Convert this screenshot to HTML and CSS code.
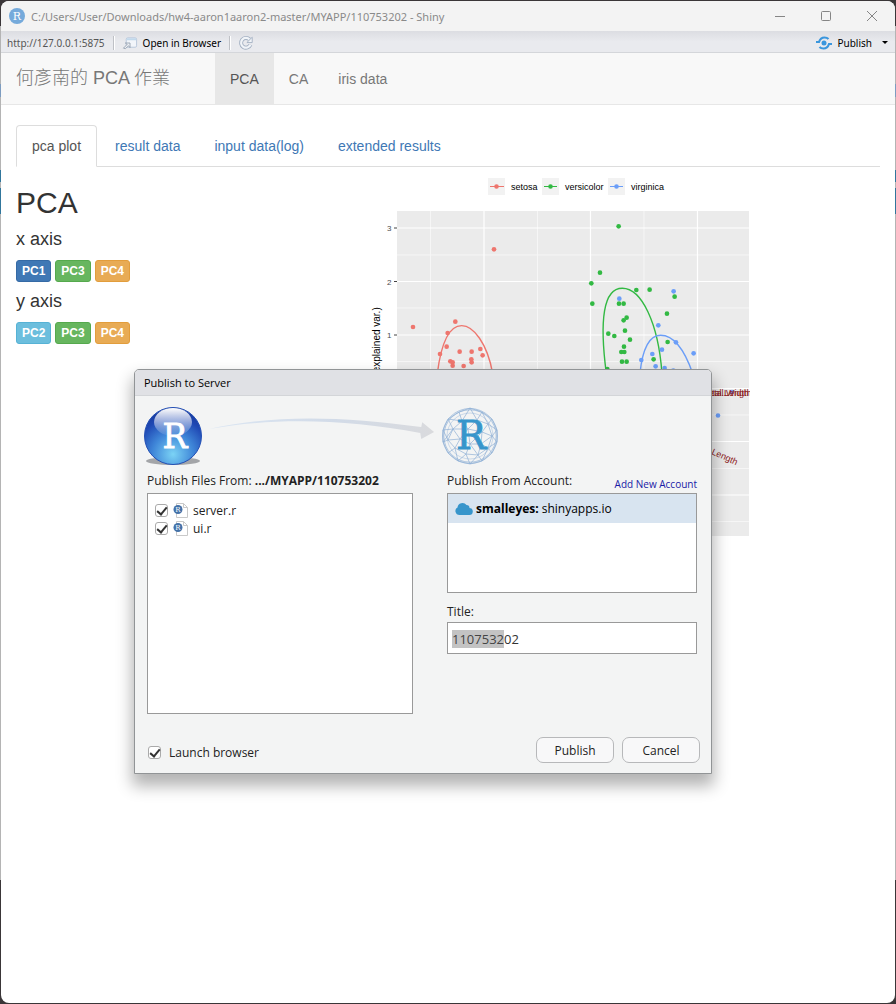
FILE: index.html
```html
<!DOCTYPE html>
<html lang="zh-Hant">
<head>
<meta charset="utf-8">
<meta name="viewport" content="width=device-width, initial-scale=1">
<title>Shiny</title>
<link rel="stylesheet" href="styles.css">
</head>
<body>
<div class="window">
  <header class="titlebar">
    <svg class="app-icon" viewBox="0 0 16 16" aria-hidden="true"><circle cx="8" cy="8" r="8" fill="#75aadb"/><text class="serif" x="8" y="12" font-size="11" text-anchor="middle" fill="#fff">R</text></svg>
    <span class="title">C:/Users/User/Downloads/hw4-aaron1aaron2-master/MYAPP/110753202 - Shiny</span>
    <div class="window-controls">
      <button aria-label="Minimize"><svg viewBox="0 0 12 12"><path d="M1 6.5h10"/></svg></button>
      <button aria-label="Maximize"><svg viewBox="0 0 12 12"><rect x="1.5" y="1.5" width="9" height="9" rx="1"/></svg></button>
      <button aria-label="Close"><svg viewBox="0 0 12 12"><path d="M1 1l10 10M11 1L1 11"/></svg></button>
    </div>
  </header>
  <div class="toolbar">
    <span class="url">http://127.0.0.1:5875</span>
    <span class="divider"></span>
    <button class="tool"><svg class="open-icon" viewBox="0 0 17 14" aria-hidden="true"><rect x="4.500" y="1.500" width="11" height="10" rx="1.500" fill="#f2f5fa" stroke="#b7c6da"/><path d="M5 2h10v2H5z" fill="#c2d9ec"/><path d="M1.500 12.500l4-4-2-1.500h5v5l-1.500-2-3.500 3z" fill="#eef1f5" stroke="#9aa4b3"/></svg>Open in Browser</button>
    <span class="divider"></span>
    <button class="tool" aria-label="Refresh"><svg class="refresh-icon" viewBox="0 0 18 18"><path d="M13 5A5.500 5.500 0 1 0 14 11" fill="none" stroke="#a3b0c2" stroke-width="4.500"/><path d="M13 5A5.500 5.500 0 1 0 14 11" fill="none" stroke="#f1f4f8" stroke-width="2.500"/><path d="M10 8.500h6v-6z" fill="#f1f4f8" stroke="#a3b0c2"/></svg></button>
    <button class="tool publish"><svg class="publish-icon" viewBox="0 0 16 14" aria-hidden="true"><circle cx="8" cy="7" r="2.500" fill="#3a96dd"/><path d="M0 6h3c1-3 3-4.500 5.500-4.500 2 0 3 .5 4 1.500M16 8h-3c-1 3-3 4.500-5.500 4.500-2 0-3-.5-4-1.500" fill="none" stroke="#3a96dd" stroke-width="2.200"/></svg>Publish<span class="caret"></span></button>
  </div>
  <nav class="navbar">
    <a class="brand" href="#">何彥南的 PCA 作業</a>
    <a class="nav-link active" href="#">PCA</a>
    <a class="nav-link" href="#">CA</a>
    <a class="nav-link" href="#">iris data</a>
  </nav>
  <main class="page">
    <div class="tabs">
      <a class="tab active" href="#">pca plot</a>
      <a class="tab" href="#">result data</a>
      <a class="tab" href="#">input data(log)</a>
      <a class="tab" href="#">extended results</a>
    </div>
    <div class="columns">
      <section class="axes">
        <h2>PCA</h2>
        <h4>x axis</h4>
        <div class="buttons"><button class="btn primary">PC1</button><button class="btn success">PC3</button><button class="btn warning">PC4</button></div>
        <h4>y axis</h4>
        <div class="buttons"><button class="btn info">PC2</button><button class="btn success">PC3</button><button class="btn warning">PC4</button></div>
      </section>
      <svg class="plot" viewBox="370 174 380 366" role="img" aria-label="PCA biplot">
        <rect x="397" y="211" width="352" height="325" fill="#ebebeb"/>
        <path d="M430.500 211v325M537.500 211v325M644 211v325M397 255h352M397 308h352M397 361.500h352M397 415h352M397 468.500h352M397 521.500h352" stroke="#f6f6f6"/>
        <path d="M484 211v325M590.500 211v325M697.500 211v325M397 228h352M397 281.500h352M397 335h352M397 388.500h352M397 441.500h352M397 495h352" stroke="#fff" stroke-width="1.200"/>
        <path d="M394 228h3M394 281.500h3M394 335h3" stroke="#444"/>
        <g class="tick"><text x="387" y="231">3</text><text x="387" y="285">2</text><text x="387" y="338">1</text></g>
        <text class="axis-title" transform="translate(380 429) rotate(-90)">PC2 (22.9% explained var.)</text>
        <g fill="#f2f2f2"><rect x="488" y="178" width="17" height="17"/><rect x="542" y="178" width="17" height="17"/><rect x="608" y="178" width="17" height="17"/></g>
        <g stroke-width="1.200"><path d="M490 186.500h14" stroke="#ee766e"/><path d="M544 186.500h13" stroke="#32b943"/><path d="M610 186.500h13" stroke="#6b9ef8"/></g>
        <circle cx="496.500" cy="186.500" r="2.300" fill="#ee766e"/><circle cx="550.500" cy="186.500" r="2.300" fill="#32b943"/><circle cx="616.500" cy="186.500" r="2.300" fill="#6b9ef8"/>
        <g class="legend"><text x="511" y="190">setosa</text><text x="565" y="190">versicolor</text><text x="631" y="190">virginica</text></g>
        <g transform="translate(360 170) scale(.3333)" fill="none" stroke-width="4.200">
          <path d="M232 610C245 510 270 467 305 467C340 467 382 520 398 610" stroke="#ee766e"/>
          <path d="M739 610C718 450 730 355 787 355C845 355 895 460 906 610" stroke="#32b943"/>
          <path d="M840 610C848 535 868 496 902 496C935 496 970 530 998 610" stroke="#6b9ef8"/>
        </g>
        <g id="dots" transform="translate(360 170) scale(.3333)"></g>
        <circle cx="732" cy="392" r="2.300" fill="#6b9ef8"/><circle cx="718" cy="415.500" r="2.300" fill="#6b9ef8"/>
        <g class="vector"><text x="701" y="396">Petal.Length</text><text x="703" y="396">Petal.Width</text><text x="711" y="454" transform="rotate(24 711 454)">Length</text></g>
      </svg>
    </div>
  </main>
</div>

<section class="dialog" role="dialog" aria-labelledby="dlg-title">
  <h1 class="dialog-title" id="dlg-title">Publish to Server</h1>
  <div class="dialog-body">
    <div class="hero">
      <svg class="ball" viewBox="0 0 60 60" aria-hidden="true">
        <defs><radialGradient id="ball" cx=".5" cy=".82" r=".8"><stop offset="0" stop-color="#7bd3f5"/><stop offset=".45" stop-color="#3f86d8"/><stop offset=".8" stop-color="#1f48b4"/><stop offset="1" stop-color="#183a9c"/></radialGradient><linearGradient id="gloss" x2="0" y2="1"><stop offset="0" stop-color="#fff"/><stop offset="1" stop-color="#fff" stop-opacity=".05"/></linearGradient></defs>
        <ellipse cx="30" cy="55" rx="27" ry="4" fill="#a3a5a8"/><circle cx="30" cy="30" r="28.500" fill="url(#ball)" stroke="#2450b5"/><ellipse cx="30" cy="16" rx="19" ry="14" fill="url(#gloss)"/>
        <text class="serif" x="32" y="42" font-size="33" text-anchor="middle" fill="#fff" stroke="#fff" stroke-width=".8">R</text>
      </svg>
      <svg class="arrow" viewBox="0 0 240 60" aria-hidden="true"><defs><linearGradient id="arr"><stop offset="0" stop-color="#dbe6f3"/><stop offset=".55" stop-color="#d2dbe8"/><stop offset="1" stop-color="#d9dadd"/></linearGradient></defs><path d="M6 23C72 8 140 10 221 21L222 16L234 26L221 33L220 27C147 13 72 11 6 23Z" fill="url(#arr)"/></svg>
      <svg class="globe" viewBox="0 0 60 60" aria-hidden="true">
        <g fill="none" stroke="#8fb0d6" stroke-width=".7"><circle cx="30" cy="30" r="27.500"/><circle cx="30" cy="30" r="26.200"/><circle cx="30" cy="30" r="23" opacity=".6"/><path d="M30 2L19 6L8 13L3 24V36L8 47L18 55L30 58L42 55L52 47L57 36V24L52 13L42 6ZM19 6L22 15L30 2L37 14L42 6M8 13L22 15L13 23L8 13M3 24L13 23L8 34L3 24M3 36L8 34L15 42L8 47M15 42L18 55L26 48L30 58L38 49L42 55L48 42L52 47M57 36L48 42L52 30L57 24L48 18L52 13M42 6L48 18L37 14L22 15L28 23L13 23L20 33L8 34M20 33L15 42L26 48L30 38L20 33L28 23L37 14L42 26L28 23L30 38L42 26L48 18L52 30L42 26L41 38L30 38L38 49L48 42L41 38L52 30M26 48L38 49L41 38M13 23L3 36M52 30L57 36"/></g>
        <text class="serif" x="31" y="43" font-size="40" text-anchor="middle" fill="#3795cb" stroke="#3795cb" stroke-width=".8">R</text>
      </svg>
    </div>
    <div class="forms">
      <div class="files">
        <p class="label">Publish Files From: <b>.../MYAPP/110753202</b></p>
        <div class="file-list">
          <label class="check"><input type="checkbox" checked><svg class="file-icon" viewBox="0 0 16 16" aria-hidden="true"><path d="M3.500 1.500h7l4 4v10h-11zM10.500 1.500v4h4" fill="#fff" stroke="#c9c9c9"/><circle cx="5" cy="7.500" r="4.500" fill="#4472a8"/><text class="serif" x="5" y="10" font-size="7" text-anchor="middle" fill="#fff">R</text></svg><span>server.r</span></label>
          <label class="check"><input type="checkbox" checked><svg class="file-icon" viewBox="0 0 16 16" aria-hidden="true"><path d="M3.500 1.500h7l4 4v10h-11zM10.500 1.500v4h4" fill="#fff" stroke="#c9c9c9"/><circle cx="5" cy="7.500" r="4.500" fill="#4472a8"/><text class="serif" x="5" y="10" font-size="7" text-anchor="middle" fill="#fff">R</text></svg><span>ui.r</span></label>
        </div>
      </div>
      <div class="account">
        <div class="label split"><span>Publish From Account:</span><a href="#">Add New Account</a></div>
        <div class="account-list"><div class="account-row"><svg class="cloud" viewBox="0 0 18 14" aria-hidden="true"><path d="M4.500 13A4 4 0 0 1 2.500 5.500A5 5 0 0 1 11.500 3A3 3 0 0 1 14.500 6A3.500 3.500 0 0 1 14 13Z" fill="#3795cb"/></svg><b>smalleyes:</b> shinyapps.io</div></div>
        <label class="label title-label" for="app-title">Title:</label>
        <input class="title-input" id="app-title" type="text" value="110753202">
      </div>
    </div>
    <div class="footer">
      <label class="check launch"><input type="checkbox" checked><span>Launch browser</span></label>
      <button class="action">Publish</button>
      <button class="action">Cancel</button>
    </div>
  </div>
</section>
<script src="app.js"></script>
</body>
</html>
```
FILE: styles.css
```css
* { box-sizing: border-box; }
body {
  margin: 0;
  min-height: 100vh;
  padding: 1px;
  display: flex;
  position: relative;
  background: linear-gradient(#3a3638 26px, #b4b4b4 26px, #b4b4b4 84px, #7d9cc0 84px, #7d9cc0 97px, #b4b4b4 97px, #b4b4b4 170px, #31769c 170px, #31769c 182px, #b4b4b4 182px, #b4b4b4 188px, #31769c 188px, #31769c 214px, #b4b4b4 214px, #b4b4b4 880px, #3a3638 880px);
  font-family: "Open Sans", "Noto Sans", sans-serif;
  font-size: 12px;
  color: #222;
}
button { font: inherit; color: inherit; cursor: pointer; }
a { text-decoration: none; }
.serif { font-family: "DejaVu Serif", serif; }
.window { flex: 1; background: #fff; border-radius: 8px; overflow: hidden; }
.titlebar { height: 30px; display: flex; align-items: center; background: #f3f3f3; padding-left: 8px; color: #8a8a8a; }
.app-icon { width: 16px; height: 16px; margin-right: 6px; }
.title { flex: 1; font-family: "Noto Sans", sans-serif; font-size: 11px; }
.window-controls { display: flex; }
.window-controls button { width: 46px; height: 30px; padding: 0; border: 0; background: none; display: grid; place-items: center; }
.window-controls svg { width: 12px; height: 12px; fill: none; stroke: #858585; }
.toolbar { height: 22px; display: flex; align-items: center; padding: 2px 7px 0 6px; background: linear-gradient(#dcdde2, #e9eaee 50%, #e9eaee); border-bottom: 1px solid #d4d6da; font-size: 10px; color: #000; }
.url { color: #555; font-family: "Noto Sans", sans-serif; }
.divider { width: 2px; height: 14px; margin: 0 7px 0 8px; border-left: 1px solid #bfc1c6; border-right: 1px solid #fff; }
.tool { display: flex; align-items: center; gap: 5px; padding: 0; border: 0; background: none; font-family: "Noto Sans", sans-serif; }
.open-icon { width: 16px; height: 14px; }
.refresh-icon { width: 16px; height: 16px; }
.publish { margin-left: auto; }
.publish-icon { width: 16px; height: 14px; }
.caret { margin-left: 5px; border: 3px solid transparent; border-top-color: #000; border-bottom: 0; }
.navbar { display: flex; height: 52px; background: #f8f8f8; border-bottom: 1px solid #e7e7e7; font-family: "Liberation Sans", Arial, "Noto Sans CJK TC", sans-serif; font-size: 14px; line-height: 20px; }
.brand { padding: 15px; margin-right: 30px; font-size: 18px; font-weight: 300; color: #777; white-space: nowrap; }
.nav-link { padding: 16px 15px 15px; color: #777; }
.nav-link.active { background: #e7e7e7; color: #555; }
.page { padding: 20px 15px; font-family: "Liberation Sans", Arial, sans-serif; color: #333; }
.tabs { display: flex; gap: 2px; border-bottom: 1px solid #ddd; font-size: 14px; line-height: 20px; }
.tab { padding: 10px 15px; border: 1px solid transparent; border-radius: 4px 4px 0 0; margin-bottom: -1px; color: #4078b5; }
.tab.active { color: #555; background: #fff; border-color: #ddd; border-bottom-color: #fff; }
.columns { display: grid; grid-template-columns: 354px 1fr; }
h2 { margin: 19px 0 10px; font-size: 30px; font-weight: 400; line-height: 33px; }
h4 { margin: 9px 0 11px; font-size: 18px; font-weight: 400; line-height: 20px; }
.buttons { display: flex; gap: 4px; }
.btn { height: 22px; padding: 1px 5px; border: 1px solid; border-radius: 3px; font-size: 12px; font-weight: 700; line-height: 18px; color: #fff; }
.primary { background: #4078b5; border-color: #356aa5; }
.success { background: #67b65f; border-color: #55a94d; }
.warning { background: #e8ab55; border-color: #e29d3c; }
.info { background: #6cbedd; border-color: #56b2d5; }
.plot { width: 380px; height: 366px; margin-top: 7px; }
.plot text { font-family: "Liberation Sans", Arial, sans-serif; }
.tick { font-size: 8px; fill: #4d4d4d; }
.axis-title { font-size: 10px; fill: #000; }
.legend { font-size: 9px; fill: #000; }
.vector { font-size: 9px; fill: #8b1a1a; }
.dialog { position: absolute; left: 134px; top: 369px; width: 578px; background: #f3f4f4; border: 1px solid #919496; border-radius: 5px 5px 0 0; box-shadow: 0 10px 16px 2px rgba(0, 0, 0, .3); }
.dialog-title { margin: 0; height: 26px; padding: 0 9px; background: #e0e1e5; border-bottom: 1px solid #d3d5d8; border-radius: 4px 4px 0 0; font-size: 11px; font-weight: 400; line-height: 26px; color: #000; }
.dialog-body { padding: 10px 11px 10px 12px; font-size: 12px; }
.hero { display: flex; height: 62px; margin-left: -4px; }
.ball, .globe { width: 60px; height: 60px; }
.arrow { width: 237px; height: 60px; }
.forms { display: flex; justify-content: space-between; padding-right: 3px; }
.files { width: 266px; }
.account { width: 250px; display: flex; flex-direction: column; }
.label { margin: 0; height: 25px; line-height: 26px; white-space: nowrap; }
.split { display: flex; justify-content: space-between; }
.split a { color: #1a1aa6; font-size: 10px; line-height: 33px; }
.file-list { height: 221px; padding: 7px; background: #fff; border: 1px solid #999; }
.check { display: flex; align-items: center; height: 18px; }
.check input { appearance: none; width: 13px; height: 13px; margin: 0; border: 1px solid #aaa; border-radius: 3px; background: #fff; display: grid; place-items: center; }
.check input:checked::after { content: ""; width: 4px; height: 8px; margin-bottom: 2px; border: solid #333; border-width: 0 2px 2px 0; transform: rotate(40deg); }
.file-icon { width: 16px; height: 16px; margin: 0 4px 0 5px; }
.account-list { height: 100px; background: #fff; border: 1px solid #999; }
.account-row { display: flex; align-items: center; gap: 3px; height: 29px; padding-left: 7px; background: #d8e4f0; color: #000; }
.cloud { width: 18px; height: 14px; }
.title-label { height: 29px; padding-top: 6px; }
.title-input { height: 32px; padding: 2px 4px 0; border: 1px solid #999; background: #fff; font: 13px "Open Sans", sans-serif; color: #333; outline: 0; }
.title-input::selection { background: #c3c3c3; color: #444; }
.footer { display: flex; align-items: center; gap: 8px; margin-top: 23px; }
.launch { margin-right: auto; padding-left: 1px; padding-top: 5px; gap: 8px; }
.action { width: 78px; height: 26px; padding: 0; border: 1px solid #b7b8ba; border-radius: 7px; background: #f8f8f9; }
```
FILE: app.js
```js
const groups = {
  "#ee766e": [[402,238],[159,471],[286,455],[263,489],[260,530],[240,552],[299,545],[335,545],[361,537],[368,556],[334,568],[335,577],[271,574],[278,577],[278,587],[311,588]],
  "#32b943": [[776,169],[720,308],[694,340],[697,401],[829,360],[869,359],[944,380],[921,431],[777,401],[791,401],[800,443],[791,451],[745,491],[763,498],[795,482],[810,509],[923,516],[792,530],[784,546],[793,546],[881,568],[786,575],[800,575],[742,597]],
  "#6b9ef8": [[778,386],[941,364],[895,466],[948,517],[906,539],[877,552],[844,570],[1001,550],[887,589],[914,594],[940,602]]
};
const layer = document.getElementById("dots");
for (const [color, points] of Object.entries(groups)) {
  for (const [x, y] of points) {
    const dot = document.createElementNS("http://www.w3.org/2000/svg", "circle");
    dot.setAttribute("cx", x);
    dot.setAttribute("cy", y);
    dot.setAttribute("r", 7);
    dot.setAttribute("fill", color);
    layer.append(dot);
  }
}
const title = document.getElementById("app-title");
title.focus();
title.setSelectionRange(0, 7);
```
